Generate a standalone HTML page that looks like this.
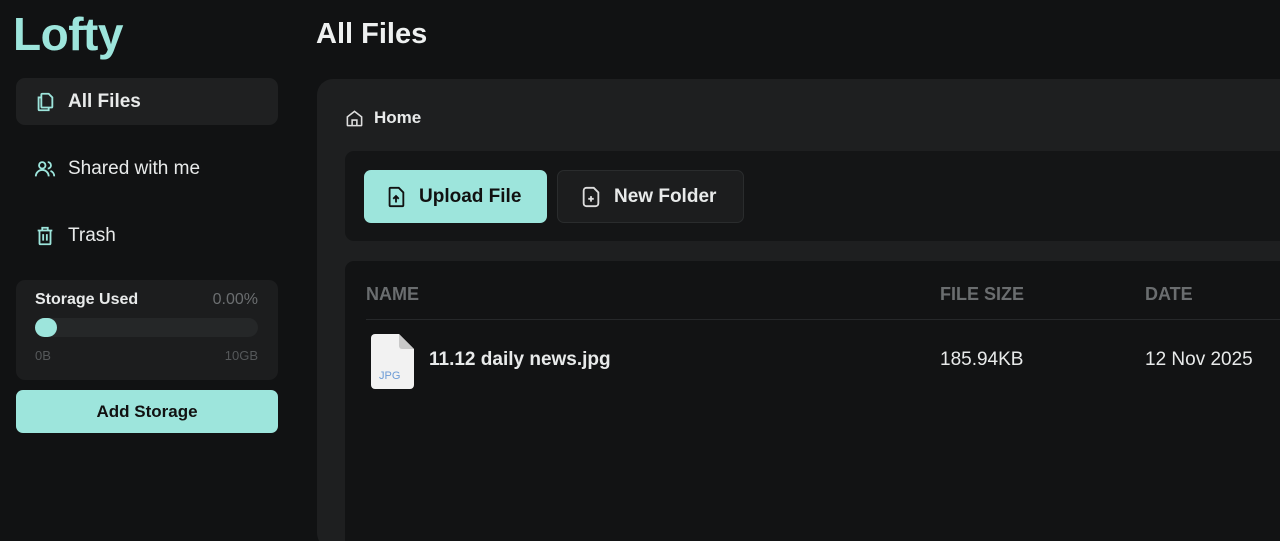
<!DOCTYPE html>
<html><head><style>
*{margin:0;padding:0;box-sizing:border-box}
html{width:1280px;height:541px;overflow:hidden}
body{width:1280px;height:541px;overflow:hidden;background:#111213;font-family:"Liberation Sans",sans-serif;color:#e8eaea;position:relative}
.abs{position:absolute}
.logo{left:13px;top:7px;font-size:46px;font-weight:bold;color:#9de5dc;letter-spacing:-0.5px}
.nav{left:16px;width:262px;height:47px;border-radius:9px;display:flex;align-items:center;padding-left:18px;font-size:19px;gap:12px}
.nav svg{width:22px;height:22px}
.title{left:316px;top:18px;font-size:29px;font-weight:bold;color:#eef0f0}
.panel{left:317px;top:79px;width:1000px;height:470px;background:#1e1f20;border-radius:16px}
.btn{height:53px;border-radius:7px;display:flex;align-items:center;font-size:19px;font-weight:bold;gap:12px}
</style></head><body>
<div class="abs logo">Lofty</div>
<div class="abs nav" style="top:78px;background:#1f2021;font-weight:bold">
<svg viewBox="0 0 24 24" fill="none" stroke="#9de5dc" stroke-width="2"><path d="M9 3h7l4 4v10a1 1 0 0 1-1 1H9a1 1 0 0 1-1-1V4a1 1 0 0 1 1-1z"/><path d="M8 7H5v13a1 1 0 0 0 1 1h10v-3"/></svg>All Files</div>
<div class="abs nav" style="top:145px">
<svg viewBox="0 0 24 24" fill="none" stroke="#9de5dc" stroke-width="2"><circle cx="9" cy="8" r="3.5"/><path d="M2 20a7 7 0 0 1 14 0"/><path d="M15 4.5a3.5 3.5 0 0 1 0 7M18 14a6 6 0 0 1 4 6"/></svg>Shared with me</div>
<div class="abs nav" style="top:212px">
<svg viewBox="0 0 24 24" fill="none" stroke="#9de5dc" stroke-width="2"><path d="M4 6h16M9 6V3h6v3M6 6v14a1 1 0 0 0 1 1h10a1 1 0 0 0 1-1V6M10 10v7M14 10v7"/></svg>Trash</div>
<div class="abs" style="left:16px;top:280px;width:262px;height:100px;background:#1c1d1e;border-radius:9px">
<div class="abs" style="left:19px;top:11px;font-size:16px;font-weight:bold">Storage Used</div>
<div class="abs" style="right:20px;top:11px;font-size:16px;color:#6b6e70">0.00%</div>
<div class="abs" style="left:19px;top:38px;width:223px;height:19px;border-radius:10px;background:#252728"></div>
<div class="abs" style="left:19px;top:38px;width:22px;height:19px;border-radius:10px;background:#9de5dc"></div>
<div class="abs" style="left:19px;top:68px;font-size:13px;color:#55585a">0B</div>
<div class="abs" style="right:20px;top:68px;font-size:13px;color:#55585a">10GB</div>
</div>
<div class="abs" style="left:16px;top:390px;width:262px;height:43px;border-radius:7px;background:#9de5dc;color:#111;font-size:17px;font-weight:bold;display:flex;align-items:center;justify-content:center">Add Storage</div>

<div class="abs title">All Files</div>
<div class="abs panel"></div>
<div class="abs" style="left:345px;top:108px;display:flex;align-items:center;gap:10px;font-size:17px;font-weight:bold">
<svg width="19" height="19" viewBox="0 0 24 24" fill="none" stroke="#ddd" stroke-width="2"><path d="M3 10l9-7 9 7v10a1 1 0 0 1-1 1H4a1 1 0 0 1-1-1z"/><path d="M9 21v-7h6v7"/></svg>Home</div>
<div class="abs" style="left:345px;top:151px;width:960px;height:90px;background:#141516;border-radius:9px"></div>
<div class="abs btn" style="left:364px;top:170px;width:183px;background:#9de5dc;color:#111;padding-left:21px">
<svg width="22" height="22" viewBox="0 0 24 24" fill="none" stroke="#111" stroke-width="2"><path d="M6 2h9l5 5v14a1 1 0 0 1-1 1H6a1 1 0 0 1-1-1V3a1 1 0 0 1 1-1z"/><path d="M12 18v-6M9 14l3-3 3 3"/></svg>Upload File</div>
<div class="abs btn" style="left:557px;top:170px;width:187px;background:#1c1d1e;border:1px solid #2a2c2d;padding-left:22px">
<svg width="22" height="22" viewBox="0 0 24 24" fill="none" stroke="#ddd" stroke-width="2"><path d="M7 2h8l5 5v12a3 3 0 0 1-3 3H7a3 3 0 0 1-3-3V5a3 3 0 0 1 3-3z"/><path d="M12 11v6M9 14h6"/></svg>New Folder</div>
<div class="abs" style="left:345px;top:261px;width:960px;height:300px;background:#121314;border-radius:9px"></div>
<div class="abs" style="left:366px;top:284px;font-size:18px;font-weight:bold;color:#6a6d6f">NAME</div>
<div class="abs" style="left:940px;top:284px;font-size:18px;font-weight:bold;color:#6a6d6f">FILE SIZE</div>
<div class="abs" style="left:1145px;top:284px;font-size:18px;font-weight:bold;color:#6a6d6f">DATE</div>
<div class="abs" style="left:366px;top:319px;width:914px;height:1px;background:#26282a"></div>
<svg class="abs" style="left:371px;top:334px" width="43" height="55" viewBox="0 0 43 55"><path d="M4 0h24l15 15v36a4 4 0 0 1-4 4H4a4 4 0 0 1-4-4V4a4 4 0 0 1 4-4z" fill="#f2f2f2"/><path d="M28 0l15 15H31a3 3 0 0 1-3-3z" fill="#c9c9c9"/><text x="8" y="45" font-family="Liberation Sans" font-size="11" fill="#6c9bd6">JPG</text></svg>
<div class="abs" style="left:429px;top:349px;font-size:19px;font-weight:bold">11.12 daily news.jpg</div>
<div class="abs" style="left:940px;top:349px;font-size:19px">185.94KB</div>
<div class="abs" style="left:1145px;top:349px;font-size:19px">12 Nov 2025</div>
</body></html>
